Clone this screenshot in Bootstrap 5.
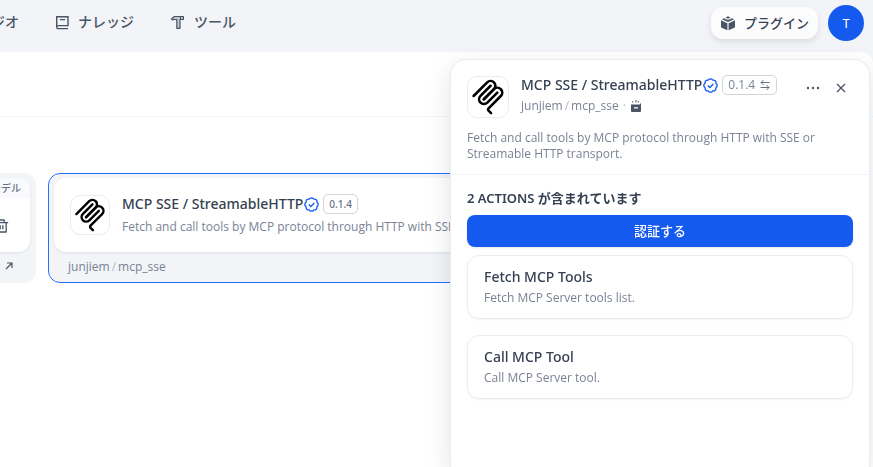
<!DOCTYPE html>
<html lang="ja">
<head>
<meta charset="utf-8">
<meta name="viewport" content="width=device-width, initial-scale=1">
<title>プラグイン</title>
<link href="https://cdn.jsdelivr.net/npm/bootstrap@5.3.0/dist/css/bootstrap.min.css" rel="stylesheet">
<style>
body{font-family:"Noto Sans","Noto Sans CJK JP",sans-serif;font-size:12px;line-height:16px;color:#676f83;background:#f2f4f7;overflow:hidden}
svg{flex:none;display:block}
a{color:inherit;text-decoration:none}
.topbar{height:52px;padding:0 9px 6px 0}
.topnav{font-size:14px;line-height:20px;font-weight:500;color:#495464;padding-bottom:2px}
.nav-studio{width:19px}
.nav-knowledge{margin-left:36px}
.nav-tools{margin-left:36px}
.account{gap:10px}
.btn-plugin{height:32px;padding:0 9px;border:0;border-radius:12px;background:#fcfcfd;color:#354052;font-size:13px;font-weight:500;box-shadow:0 3px 6px #1018281a}
.btn-avatar{width:36px;height:36px;border:0;border-radius:50%;background:#155aef;color:#fff;font-size:13px}
.page{background:#fff;border-top-right-radius:12px;min-height:calc(100vh - 52px)}
.filters{height:65px;border-bottom:1px solid #f2f4f7}
.plugins{gap:12px;padding-top:56px}
.tile{height:110px;background:#f2f4f7;border-radius:12px;padding:5px}
.tile-model{width:36px;padding:5px 6px 5px 0;border-radius:0 12px 12px 0}
.tile-picked{border:1px solid #296dff;padding:4px 5px;width:560px}
.face{height:74px;background:#fff;border-radius:12px;box-shadow:0 1px 3px #10182814}
.tile-model .face{border-radius:0 12px 12px 0}
.corner{height:20px;background:#f9fafb;font-size:10px;font-weight:500;padding-right:9px;border-radius:0 12px 0 0}
.face-in{padding:16px;gap:12px}
.logo-box{width:40px;height:40px;border:1px solid #eaecf0;border-radius:10px;background:#fff}
.face-in .logo-box{margin-top:1px}
.logo-lg{width:42px;height:42px}
.name{font-size:14px;line-height:20px;font-weight:500;color:#354052;margin:0}
.badge-mark{margin:0 4px 0 1px}
.ver{height:20px;border:1px solid #d0d5dc;border-radius:5px;background:#fff;color:#676f83;padding:0 5px;font-size:10px;font-weight:500}
.ver-lg{font-size:12px;font-weight:400;padding:0 5px;gap:4px}
.thin{font-family:"Open Sans","Noto Sans CJK JP",sans-serif;color:#7a8294}
.face-in .desc{padding-top:5px}
.org{padding:7px 14px}
.slash{color:#b4bac5;margin:0 2px}
.drawer{top:59px;right:3px;bottom:0;width:420px;background:#fff;border:1px solid #eaecf0;border-bottom:0;border-radius:16px 16px 0 0;box-shadow:0 8px 24px #1018281f}
.drawer-head{padding:16px 16px 12px;border-bottom:1px solid #f2f4f7}
.head-text{padding-left:12px;margin-top:-1px}
.origin{padding-top:3px}
.tool-btn{width:24px;height:24px;border:0;background:none;padding:0;color:#495464}
.drawer-body{padding:13px 16px}
.count{font-size:13px;line-height:20px;font-weight:600;color:#354052;margin:0 0 7px}
.btn-auth{height:32px;border:0;border-radius:8px;background:#155aef;color:#fff;font-size:13px;font-weight:500;padding-bottom:2px;box-shadow:0 1px 2px #1018281a}
.act{height:64px;border:1px solid #eaecf0;border-radius:12px;padding:11px 16px;box-shadow:0 1px 2px #1018280d}
.act + .act{margin-top:16px}
.act .desc{padding-top:3px}
.desc{margin:0}
</style>
<script src="https://cdn.jsdelivr.net/npm/bootstrap@5.3.0/dist/js/bootstrap.bundle.min.js"></script>
</head>
<body>
<svg width="0" height="0" class="position-absolute" aria-hidden="true"><defs>
<symbol id="mcp" viewBox="0 0 180 180"><g fill="none" stroke="#000" stroke-width="13" stroke-linecap="round"><path d="M18 84.85L85.88 16.97C95.25 7.6 110.45 7.6 119.82 16.97C129.2 26.34 129.2 41.54 119.82 50.91L68.56 102.18"/><path d="M69.27 101.47L119.82 50.91C129.2 41.54 144.39 41.54 153.77 50.91L154.12 51.27C163.49 60.64 163.49 75.83 154.12 85.21L92.72 146.6C89.6 149.72 89.6 154.79 92.72 157.91L105.33 170.52"/><path d="M102.85 33.94L52.65 84.15C43.28 93.52 43.28 108.71 52.65 118.09C62.02 127.46 77.22 127.46 86.59 118.09L136.79 67.88"/></g></symbol>
<symbol id="verified" viewBox="-1 -1 18 18"><path fill="none" stroke="#155aef" stroke-width="1.6" stroke-linejoin="round" d="M10.067.87a2.89 2.89 0 0 0-4.134 0l-.622.638-.89-.011a2.89 2.89 0 0 0-2.924 2.924l.01.89-.636.622a2.89 2.89 0 0 0 0 4.134l.637.622-.011.89a2.89 2.89 0 0 0 2.924 2.924l.89-.01.622.636a2.89 2.89 0 0 0 4.134 0l.622-.637.89.011a2.89 2.89 0 0 0 2.924-2.924l-.01-.89.636-.622a2.89 2.89 0 0 0 0-4.134l-.637-.622.011-.89a2.89 2.89 0 0 0-2.924-2.924l-.89.01-.622-.636z"/><path fill="none" stroke="#155aef" stroke-width="1.6" d="M4.8 8l2.4 2.4 4.2-4.2"/></symbol>
</defs></svg>

<header class="topbar d-flex align-items-center justify-content-between">
  <nav class="topnav d-flex align-items-center">
    <a href="#" class="nav-studio d-flex justify-content-end overflow-hidden text-nowrap">ジオ</a>
    <a href="#" class="nav-knowledge d-flex align-items-center gap-2 text-nowrap">
      <svg width="15" height="15" viewBox="0 0 15 15" fill="none" stroke="#495464" stroke-width="1.4"><path d="M1.7 12V1.700H13V10.600H3.200a1.500 1.500 0 0 0 0 3H13M5 4.600h5"/></svg>
      ナレッジ</a>
    <a href="#" class="nav-tools d-flex align-items-center gap-2 text-nowrap">
      <svg width="16" height="16" viewBox="0 0 16 16" fill="#c3c8d1" stroke="#495464" stroke-width="1.2" stroke-linejoin="round"><path d="M1.500 5L4.400 2.500H13.400V5.500H10V14.300H6.800V5.500H4.200L2.800 6Z"/><path d="M10.500 2.500v3"/></svg>
      ツール</a>
  </nav>
  <div class="account d-flex align-items-center">
    <button type="button" class="btn-plugin d-flex align-items-center gap-2 text-nowrap">
      <svg width="16" height="16" viewBox="0 0 16 16" fill="#495464"><path d="M1 5.200l6.400 3v7L1.700 12.700Q1 12.400 1 11.700zM15 5.200l-6.400 3v7l5.700-2.500q.7-.3.7-1zM8 7L2 4.200l1.800-.9L8 5.100l4.200-1.800 1.800.9zM5.500 2.600L8 1.200l2.500 1.400L8 3.800z"/></svg>
      プラグイン</button>
    <button type="button" class="btn-avatar" aria-label="アカウント">T</button>
  </div>
</header>

<main class="page overflow-hidden">
  <div class="filters"></div>
  <div class="plugins d-flex">
    <article class="tile tile-model flex-shrink-0">
      <div class="face d-flex flex-column">
        <div class="corner d-flex align-items-center justify-content-end overflow-hidden text-nowrap">モデル</div>
        <button type="button" class="tool-btn mt-3 d-flex align-items-center" aria-label="削除"><svg width="9" height="16" viewBox="10 0 13 24" fill="#495464"><path d="M17 6H22V8H20V21Q20 22 19 22H5Q4 22 4 21V8H2V6H7V3Q7 2 8 2H16Q17 2 17 3ZM18 8H6V20H18ZM9 11H11V17H9ZM13 11H15V17H13ZM9 4V6H15V4Z" fill-rule="evenodd"/></svg></button>
      </div>
      <a href="#" class="d-flex pt-2 ps-1" aria-label="開く"><svg width="12" height="12" viewBox="0 0 12 12" fill="none" stroke="#495464" stroke-width="1.2"><path d="M3 3h5v5M8 3L2 9"/></svg></a>
    </article>
    <article class="tile tile-picked flex-shrink-0">
      <div class="face face-in d-flex">
        <div class="logo-box d-flex align-items-center justify-content-center flex-shrink-0"><svg width="34" height="34"><use href="#mcp"/></svg></div>
        <div>
          <div class="d-flex align-items-center"><h2 class="name text-nowrap">MCP SSE / StreamableHTTP</h2><svg class="badge-mark" width="15" height="15"><use href="#verified"/></svg><span class="ver d-flex align-items-center">0.1.4</span></div>
          <p class="desc thin text-nowrap">Fetch and call tools by MCP protocol through HTTP with SSE or Streamable</p>
        </div>
      </div>
      <div class="org thin">junjiem<span class="slash">/</span>mcp_sse</div>
    </article>
  </div>
</main>

<aside class="drawer position-fixed">
  <div class="drawer-head">
    <div class="d-flex">
      <div class="logo-box logo-lg d-flex align-items-center justify-content-center flex-shrink-0"><svg width="36" height="36"><use href="#mcp"/></svg></div>
      <div class="head-text flex-grow-1">
        <div class="d-flex align-items-center"><h1 class="name text-nowrap">MCP SSE / StreamableHTTP</h1><svg class="badge-mark" width="15" height="15"><use href="#verified"/></svg>
          <button type="button" class="ver ver-lg thin d-flex align-items-center">0.1.4 <svg width="12" height="12" viewBox="0 0 12 12" fill="none" stroke="#676f83"><path d="M10.500 3.500H2M4.500 1L2 3.500L4.500 6M1.500 8.500H10M7.500 6L10 8.500L7.500 11"/></svg></button></div>
        <div class="origin d-flex align-items-center thin"><span>junjiem<span class="slash">/</span>mcp_sse</span><span class="slash ms-1 me-1">·</span>
          <svg width="12" height="12" viewBox="0 0 12 12" fill="#495464"><path fill-rule="evenodd" d="M1 4.500H9.500L11 3V11Q11 12 10 12H2Q1 12 1 11ZM4 7.200V8.400H8V7.200Z"/><path d="M2.500 1l1 1-.7.700-1-1zM5.500 0h1V2.500h-1zM8.500 1l.8.600-1 1.200-.8-.6z"/></svg></div>
      </div>
      <div class="d-flex gap-1">
        <button type="button" class="tool-btn d-flex align-items-center justify-content-center" aria-label="その他"><svg width="16" height="16" viewBox="0 0 16 16" fill="#495464"><circle cx="3" cy="8" r="1.200"/><circle cx="8" cy="8" r="1.200"/><circle cx="13" cy="8" r="1.200"/></svg></button>
        <button type="button" class="tool-btn d-flex align-items-center justify-content-center" aria-label="閉じる"><svg width="16" height="16" viewBox="0 0 16 16" stroke="#495464" stroke-width="1.300"><path d="M4 4l8 8M12 4l-8 8"/></svg></button>
      </div>
    </div>
    <p class="desc thin pt-2 mt-1">Fetch and call tools by MCP protocol through HTTP with SSE or Streamable HTTP transport.</p>
  </div>
  <div class="drawer-body">
    <h2 class="count">2 ACTIONS が含まれています</h2>
    <button type="button" class="btn-auth w-100 mb-2">認証する</button>
    <section class="act"><h3 class="name">Fetch MCP Tools</h3><p class="desc thin">Fetch MCP Server tools list.</p></section>
    <section class="act"><h3 class="name">Call MCP Tool</h3><p class="desc thin">Call MCP Server tool.</p></section>
  </div>
</aside>
</body>
</html>
